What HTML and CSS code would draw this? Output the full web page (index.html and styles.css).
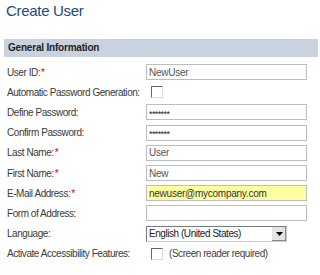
FILE: index.html
```html
<!DOCTYPE html>
<html lang="en">
<head>
  <meta charset="UTF-8" />
  <title>Create User</title>
  <link rel="stylesheet" href="styles.css">
</head>
<body>
  <h1 class="title">Create User</h1>

  <div class="section">
    <div class="section-head">General Information</div>

    <div class="form">
      <label>User ID:<span class="req">*</span></label>
      <div class="field"><input type="text" value="NewUser"></div>

      <label>Automatic Password Generation:</label>
      <div class="field"><span class="check"></span></div>

      <label>Define Password:</label>
      <div class="field"><input type="text" class="pw" value="*******"></div>

      <label>Confirm Password:</label>
      <div class="field"><input type="text" class="pw" value="*******"></div>

      <label>Last Name:<span class="req">*</span></label>
      <div class="field"><input type="text" value="User"></div>

      <label>First Name:<span class="req">*</span></label>
      <div class="field"><input type="text" value="New"></div>

      <label>E-Mail Address:<span class="req">*</span></label>
      <div class="field"><input type="text" class="hl" value="newuser@mycompany.com"></div>

      <label>Form of Address:</label>
      <div class="field"><input type="text" value=""></div>

      <label>Language:</label>
      <div class="field">
        <div class="select">
          <span class="select-text">English (United States)</span>
          <span class="select-btn">
            <svg width="7" height="4" viewBox="0 0 7 4"><path d="M0 0h7L3.5 4z" fill="#000"/></svg>
          </span>
        </div>
      </div>

      <label>Activate Accessibility Features:</label>
      <div class="field"><span class="check"></span><span class="note">(Screen reader required)</span></div>
    </div>
  </div>
</body>
</html>
```

FILE: styles.css
```css
body {
  margin: 0;
  background: #fff;
  font-family: "Liberation Sans", Arial, sans-serif;
  font-size: 10px;
  letter-spacing: -0.45px;
  color: #333;
}
.title {
  margin: 0;
  padding: 2px 0 0 6px;
  height: 35px;
  box-sizing: border-box;
  font-size: 15px;
  letter-spacing: -0.3px;
  font-weight: normal;
  color: #1c4a7e;
}
.section {
  margin: 0 2px 0 4px;
}
.section-head {
  background: #c9d3df;
  height: 18px;
  line-height: 18px;
  padding-left: 4px;
  font-weight: bold;
  letter-spacing: -0.2px;
  color: #222;
  margin-top: 4px;
}
.form {
  display: grid;
  grid-template-columns: 142px 161px;
  grid-auto-rows: 20.2px;
  padding-top: 5px;
  align-items: center;
}
.form label {
  padding-left: 3px;
  white-space: nowrap;
  color: #3a3a3a;
}
.req {
  color: #d00;
  margin-left: 1px;
}
.field {
  display: flex;
  align-items: center;
}
input {
  width: 161px;
  height: 16px;
  box-sizing: border-box;
  border: 1px solid #bdbdbd;
  padding: 0 2px;
  margin: 0;
  font-family: "Liberation Sans", Arial, sans-serif;
  font-size: 10px;
  letter-spacing: -0.25px;
  color: #555;
  background: #fff;
  outline: none;
}
input.pw {
  font-size: 9px;
  letter-spacing: -0.6px;
  padding-top: 3px;
  color: #222;
}
input.hl {
  background: #ffff9f;
  color: #333;
}
.check {
  display: inline-block;
  width: 10px;
  height: 10px;
  border-top: 1px solid #666;
  border-left: 1px solid #666;
  border-right: 1px solid #ddd;
  border-bottom: 1px solid #ddd;
  background: #fff;
  margin-left: 5px;
}
.note {
  margin-left: 6px;
  color: #444;
}
.select {
  display: flex;
  width: 141px;
  height: 16px;
  box-sizing: border-box;
  border: 1px solid #7a7a7a;
  border-right-color: #ccc;
  border-bottom-color: #ccc;
  background: #fff;
}
.select-text {
  flex: 1;
  padding-left: 2px;
  line-height: 14px;
  color: #222;
}
.select-btn {
  width: 14px;
  background: #e4e4e4;
  border-left: 1px solid #fff;
  box-shadow: inset -1px -1px 0 #888;
  display: flex;
  align-items: center;
  justify-content: center;
}
```
